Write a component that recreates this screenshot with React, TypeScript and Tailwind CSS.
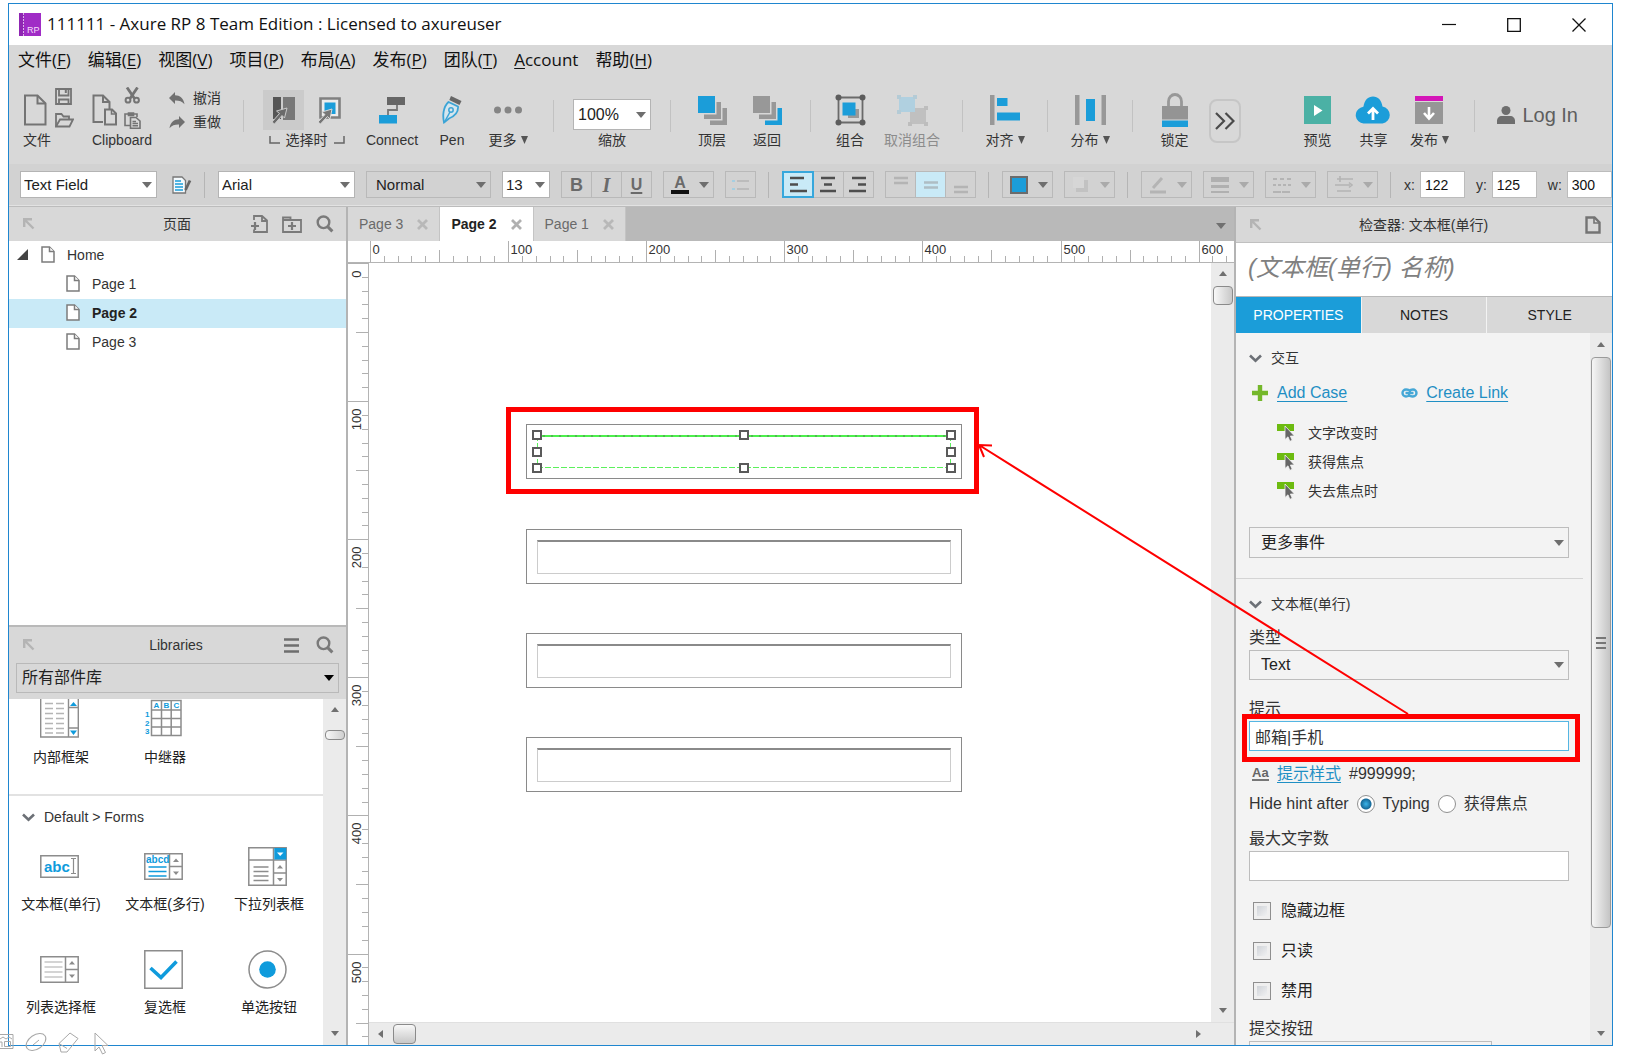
import React, { useState } from 'react'
import clsx from 'clsx'

const MENUS = [
  { label: '文件', hotkey: 'F' },
  { label: '编辑', hotkey: 'E' },
  { label: '视图', hotkey: 'V' },
  { label: '项目', hotkey: 'P' },
  { label: '布局', hotkey: 'A' },
  { label: '发布', hotkey: 'P' },
  { label: '团队', hotkey: 'T' },
  { label: 'Account' },
  { label: '帮助', hotkey: 'H' }
]

const PAGES = ['Page 1', 'Page 2', 'Page 3']
const TABS = ['Page 3', 'Page 2', 'Page 1']
const EVENTS = ['文字改变时', '获得焦点', '失去焦点时']
const FLAGS = ['隐藏边框', '只读', '禁用']

// Pixels on screen for 100 units of the ruler at this zoom
const HUNDRED = 138.1

/* ---------- small shared parts ---------- */

const Caret = ({ className = 'text-[#6e6e6e]' }: { className?: string }) => (
  <svg width="10" height="6" viewBox="0 0 10 6" className={className} aria-hidden="true">
    <path d="M0 0h10L5 6z" fill="currentColor" />
  </svg>
)

interface ComboProps {
  label: string
  value: string
  className?: string
  caret?: string
}

const Combo: React.FC<ComboProps> = ({ label, value, className = '', caret }) => (
  <div className={clsx('relative flex flex-none border', className)}>
    <select
      aria-label={label}
      defaultValue={value}
      className="w-full appearance-none bg-transparent pr-5 text-inherit outline-none"
    >
      <option>{value}</option>
    </select>
    <span className="pointer-events-none absolute inset-y-0 right-1 flex items-center">
      <Caret className={caret} />
    </span>
  </div>
)

const PopOut = () => (
  <svg width="12" height="12" viewBox="0 0 12 12" fill="none" stroke="#b4b4b4" strokeWidth="2.4" aria-hidden="true">
    <path d="M1.2 9V1.2H9M1.5 1.5l9 9" />
  </svg>
)

const Search = () => (
  <svg width="18" height="18" viewBox="0 0 18 18" fill="none" stroke="#7a7a7a" aria-hidden="true">
    <circle cx="7.5" cy="7.3" r="5.8" strokeWidth="2.4" />
    <path d="M11.6 11.6l4.8 4.8" strokeWidth="3" />
  </svg>
)

const Chevron = () => (
  <svg width="13" height="9" viewBox="0 0 13 9" fill="none" stroke="#6c7076" strokeWidth="2.6" aria-hidden="true">
    <path d="M1 1.5l5.5 5.2L12 1.5" />
  </svg>
)

const PageIcon = () => (
  <svg width="14" height="17" viewBox="0 0 14 17" fill="#fff" stroke="#7c7c7c" strokeWidth="1.5" aria-hidden="true">
    <path d="M1 1h7.5L13 5.5V16H1z" />
    <path d="M8.5 1v4.5H13" />
  </svg>
)

const Arrow = ({ dir }: { dir: 'up' | 'down' | 'left' | 'right' }) => {
  const d = {
    up: 'M4 1l4 5H0z',
    down: 'M0 2h8L4 7z',
    left: 'M1 4l5-4v8z',
    right: 'M7 4L2 0v8z'
  }[dir]
  return (
    <svg width="8" height="8" viewBox="0 0 8 8" className="flex-none" aria-hidden="true">
      <path d={d} fill="#707070" />
    </svg>
  )
}

/* ---------- toolbar ---------- */

interface ToolProps {
  label: string
  menu?: boolean
  disabled?: boolean
  className?: string
  children: React.ReactNode
}

const Tool: React.FC<ToolProps> = ({ label, menu, disabled, className = '', children }) => (
  <button type="button" disabled={disabled} className={clsx('flex flex-none flex-col items-center', className)}>
    <span className="flex h-10 items-center justify-center">{children}</span>
    <span className={clsx('flex items-center gap-1 whitespace-nowrap leading-5', disabled ? 'text-[#8c8c8c]' : 'text-[#333]')}>
      {label}
      {menu && (
        <svg width="7" height="8" viewBox="0 0 7 8" aria-hidden="true">
          <path d="M0 0h7L3.5 8z" fill="#555" />
        </svg>
      )}
    </span>
  </button>
)

const Sep = ({ className = '' }: { className?: string }) => (
  <span className={clsx('mt-[10px] h-8 w-px flex-none bg-[#c2c2c2]', className)} />
)

const Toolbar = () => (
  <div className="flex h-[86px] flex-none items-start overflow-hidden pt-3">
    <div className="w-[70px] flex-none pl-[14px]">
      <div className="flex h-10 items-center gap-2">
        <svg width="24" height="32" viewBox="0 0 24 32" fill="none" stroke="#747474" strokeWidth="2">
          <path d="M2 1.5h12.5L22.5 9.500V30.500H2z" />
          <path d="M14.500 1.500v8h8" />
        </svg>
        <div className="flex flex-col gap-2 pb-1">
          <svg width="18" height="17" viewBox="0 0 18 17" fill="none" stroke="#747474" strokeWidth="1.800">
            <path d="M1 1h15v15H1zM4 1v6.500h9.500V1M4 16v-4.500h9.500V16" />
            <path d="M10.800 2v3" strokeWidth="2" />
          </svg>
          <svg width="19" height="15" viewBox="0 0 19 15" fill="none" stroke="#747474" strokeWidth="1.800">
            <path d="M1 13.500V1h5.500l2 2.500H14V6.500" />
            <path d="M1 13.500l4-7h13l-3.500 7z" />
          </svg>
        </div>
      </div>
      <span className="leading-5 text-[#333]">文件</span>
    </div>
    <div className="w-[85px] flex-none pl-[13px]">
      <div className="flex h-10 items-center gap-[7px]">
        <svg width="25" height="32" viewBox="0 0 25 32" fill="none" stroke="#747474" strokeWidth="2">
          <path d="M11 28H1.500V1.500h9.500L17.500 8v7" />
          <path d="M11 1.500V8h6.500" />
          <path d="M13 15.500h7l4 4v11H13z" />
          <path d="M19.500 15.500v4.500H24" strokeWidth="1.500" />
        </svg>
        <div className="flex flex-col gap-2 pb-1">
          <svg width="17" height="17" viewBox="0 0 17 17" fill="none" stroke="#747474">
            <path d="M3 0.500l7.500 11M13.500 0.500L6 11.500" strokeWidth="2.800" />
            <circle cx="4" cy="13.200" r="2.400" strokeWidth="2" />
            <circle cx="12.500" cy="13.200" r="2.400" strokeWidth="2" />
          </svg>
          <svg width="17" height="17" viewBox="0 0 17 17" fill="none" stroke="#747474" strokeWidth="1.600">
            <path d="M6 13.500H1V2h12v3M4.500 1h5v2.500h-5z" />
            <path d="M6.500 5.500h5.500L16 9v7.200H6.500zM8.500 9.500h3.500M8.500 11.500h5.500M8.500 13.700h5.500" />
          </svg>
        </div>
      </div>
      <span className="leading-5 text-[#333]">Clipboard</span>
    </div>
    <div className="-mt-0.5 flex w-[79px] flex-none flex-col gap-1 pl-[5px] text-[#333]">
      <button type="button" className="flex h-5 items-center gap-2">
        <svg width="16" height="13" viewBox="0 0 16 13">
          <path d="M6 0v3.200c5 0 8.500 2.800 9.500 9C13 9 10 8.300 6 8.400V12L0 6z" fill="#707070" />
        </svg>
        撤消
      </button>
      <button type="button" className="flex h-5 items-center gap-2">
        <svg width="16" height="13" viewBox="0 0 16 13">
          <path d="M10 0v3.200c-5 0-8.500 2.800-9.500 9C3 9 6 8.300 10 8.400V12l6-6z" fill="#707070" />
        </svg>
        重做
      </button>
    </div>
    <Sep />
    <div className="w-[118px] flex-none pl-[19px] text-[#333]">
      <div className="flex h-10 w-[87px] justify-between">
        <button type="button" aria-label="相交选中" className="flex h-10 w-[41px] items-center justify-center bg-[#cbcbcb]">
          <svg width="24" height="28" viewBox="0 0 24 28">
            <path d="M1 1h8v22H1z" fill="#555" />
            <path d="M11 1h12v23H11z" fill="#787878" />
            <path d="M15 12L4.500 15l3 2.500L0 26l2.500 2 7.500-8.500 2.500 2.500z" fill="#6a6a6a" stroke="#c9c9c9" />
          </svg>
        </button>
        <button type="button" aria-label="包含选中" className="flex h-10 w-[41px] items-center justify-center">
          <svg width="24" height="28" viewBox="0 0 24 28">
            <path d="M2.500 2.500h19v19h-19z" fill="#ececec" stroke="#808080" strokeWidth="2.600" />
            <path d="M6.500 6.500h11v11.500h-11z" fill="#1b9dd9" />
            <path d="M14 13L4 16l3 2.500L0 26l2.500 2 7-7.500 2.500 2.500z" fill="#777" stroke="#d8d8d8" />
          </svg>
        </button>
      </div>
      <div className="flex w-[87px] items-center justify-center gap-[6px] leading-5">
        <svg width="11" height="8" viewBox="0 0 11 8" fill="none" stroke="#666" strokeWidth="1.500"><path d="M1 0v7h10" /></svg>
        选择时
        <svg width="11" height="8" viewBox="0 0 11 8" fill="none" stroke="#666" strokeWidth="1.500"><path d="M10 0v7H0" /></svg>
      </div>
    </div>
    <Tool label="Connect" className="w-[60px]">
      <svg width="27" height="28" viewBox="0 0 27 28">
        <path d="M8 1h18v8H8z" fill="#666" />
        <path d="M18 9v5H9v5" fill="none" stroke="#777" strokeWidth="1.800" />
        <path d="M0 19h18v8.500H0z" fill="#1b9dd9" />
      </svg>
    </Tool>
    <Tool label="Pen" className="w-[60px]">
      <svg width="20" height="28" viewBox="0 0 20 28">
        <path d="M9 0L19.500 5l-2 4L7.300 4z" fill="#666" />
        <path d="M6.500 6L16 10.500c.5 6-4 10-9 12L2 26.500C.5 20 1 11 6.500 6z" fill="#d5e6ee" stroke="#3ba4d6" strokeWidth="1.800" />
        <path d="M2.500 26l5.500-10" stroke="#3ba4d6" strokeWidth="1.500" />
        <circle cx="9" cy="14" r="2.200" fill="none" stroke="#3ba4d6" strokeWidth="1.500" />
      </svg>
    </Tool>
    <Tool label="更多" menu className="w-[52px]">
      <svg width="28" height="20" viewBox="0 0 28 20" fill="#858585">
        <circle cx="3.500" cy="10" r="3.500" /><circle cx="14" cy="10" r="3.500" /><circle cx="24.500" cy="10" r="3.500" />
      </svg>
    </Tool>
    <Sep className="ml-[19px]" />
    <div className="mx-[19px] mt-[9px] flex flex-none flex-col items-center">
      <Combo label="缩放" value="100%" className="h-[31px] w-[78px] border-[#b4b4b4] bg-white pl-1 text-base text-[#222]" />
      <span className="leading-5 text-[#333]">缩放</span>
    </div>
    <Sep />
    <Tool label="顶层" className="ml-[14px] w-[54px]">
      <svg width="29" height="30" viewBox="0 0 29 30">
        <path d="M0 1h17v17H0z" fill="#1b9dd9" />
        <path d="M18.500 7h4.500v17H6v-4.500h12.500zM24.500 13H29v17H12v-4.500h12.500z" fill="#989898" />
      </svg>
    </Tool>
    <Tool label="返回" className="w-14">
      <svg width="29" height="30" viewBox="0 0 29 30">
        <path d="M0 1h17v17H0zM18.500 7h4.500v17H6v-4.500h12.500z" fill="#989898" />
        <path d="M24.500 13H29v17H12v-4.500h12.500z" fill="#1b9dd9" />
      </svg>
    </Tool>
    <Sep className="ml-[15px]" />
    <Tool label="组合" className="ml-[9px] w-[60px]">
      <svg width="31" height="32" viewBox="0 0 31 32">
        <path d="M3.500 3.500h24v25h-24z" fill="none" stroke="#6a6a6a" strokeWidth="1.800" />
        <path d="M13 15h11v9H13z" fill="#999" />
        <path d="M7.500 8.500h13v13h-13z" fill="#1b9dd9" />
        <g fill="#5c5c5c"><circle cx="3.500" cy="3.500" r="3" /><circle cx="27.500" cy="3.500" r="3" /><circle cx="3.500" cy="28.500" r="3" /><circle cx="27.500" cy="28.500" r="3" /></g>
      </svg>
    </Tool>
    <Tool label="取消组合" disabled className="w-16">
      <svg width="31" height="32" viewBox="0 0 31 32">
        <path d="M13 14h16v16H13z" fill="#c0c0c0" />
        <path d="M2 3h16v15H2z" fill="#b0d0e0" />
        <g fill="#b4cbd6"><path d="M0 1h4v4H0zM16 1h4v4h-4zM0 16h4v4H0z" /></g>
        <g fill="#bdbdbd"><path d="M27 12h4v4h-4zM11 28h4v4h-4zM27 28h4v4h-4z" /></g>
      </svg>
    </Tool>
    <Sep className="ml-[18px]" />
    <Tool label="对齐" menu className="w-[84px]">
      <svg width="30" height="30" viewBox="0 0 30 30">
        <path d="M0 0h4.500v30H0z" fill="#989898" />
        <path d="M7 3h10.500v8H7zM7 17.500h23v8H7z" fill="#1b9dd9" />
      </svg>
    </Tool>
    <Sep />
    <Tool label="分布" menu className="w-[84px]">
      <svg width="31" height="30" viewBox="0 0 31 30">
        <path d="M0 0h4.500v30H0zM26.500 0H31v30h-4.500z" fill="#989898" />
        <path d="M11 4h9v22h-9z" fill="#1b9dd9" />
      </svg>
    </Tool>
    <Sep />
    <Tool label="锁定" className="ml-[7px] w-[69px]">
      <svg width="26" height="34" viewBox="0 0 26 34">
        <path d="M6.500 13V8.500a6.500 7 0 0 1 13 0V13" fill="none" stroke="#989898" strokeWidth="2.800" />
        <path d="M0 13h26v13.500H0z" fill="#949494" />
        <path d="M0 27.500h26V34H0z" fill="#1b9dd9" />
      </svg>
    </Tool>
    <button type="button" aria-label="展开" className="mt-[9px] flex h-11 w-8 flex-none items-center justify-center rounded-lg border-2 border-[#c6c6c6]">
      <svg width="20" height="18" viewBox="0 0 20 18" fill="none" stroke="#4a4a4a" strokeWidth="2.200">
        <path d="M1 1l8 8-8 8M10.500 1l8 8-8 8" />
      </svg>
    </button>
    <Tool label="预览" className="ml-auto w-14">
      <svg width="27" height="28" viewBox="0 0 27 28">
        <path d="M0 0h27v28H0z" fill="#4bb1a5" />
        <path d="M10 9v11l8.500-5.500z" fill="#fff" />
      </svg>
    </Tool>
    <Tool label="共享" className="w-14">
      <svg width="36" height="28" viewBox="0 0 36 28">
        <path d="M8.500 27.500A8.300 8.300 0 0 1 6 11.500C7.500 11 8 11 8.500 10.500 9.500 4 13 .5 18 .5S26.500 4 27.500 10.500a8.600 8.600 0 0 1 0 17z" fill="#1b9dd9" />
        <path d="M18 24V13M13 17.500l5-5 5 5" fill="none" stroke="#fff" strokeWidth="2.800" />
      </svg>
    </Tool>
    <Tool label="发布" menu className="w-14">
      <svg width="28" height="28" viewBox="0 0 28 28">
        <path d="M0 0h28v5H0z" fill="#d416b8" />
        <path d="M0 6h28v22H0z" fill="#969696" />
        <path d="M14 11v11M9 17l5 5.500 5-5.500" fill="none" stroke="#fff" strokeWidth="2.600" />
      </svg>
    </Tool>
    <Sep className="ml-[17px]" />
    <button type="button" className="mr-[34px] ml-[22px] mt-[13px] flex h-6 flex-none items-center gap-[7px] text-xl text-[#5e5e5e]">
      <svg width="18" height="18" viewBox="0 0 18 18" fill="#6e6e6e">
        <circle cx="9" cy="4.500" r="4.500" />
        <path d="M0 18v-3c0-3 2-5 5-5h8c3 0 5 2 5 5v3z" />
      </svg>
      Log In
    </button>
  </div>
)

/* ---------- format bar ---------- */

const BoxGroup = ({ children, className = '' }: { children: React.ReactNode; className?: string }) => (
  <div className={clsx('flex h-[27px] flex-none divide-x divide-[#b9b9b9] border border-[#b9b9b9]', className)}>{children}</div>
)

const Cell = ({ label, className = '', children }: { label: string; className?: string; children: React.ReactNode }) => (
  <button type="button" aria-label={label} className={clsx('flex flex-1 items-center justify-center', className)}>
    {children}
  </button>
)

const Lines = ({ d, color = '#4e4e4e', width = 2.4 }: { d: string; color?: string; width?: number }) => (
  <svg width="18" height="18" viewBox="0 0 18 18" fill="none" stroke={color} strokeWidth={width}><path d={d} /></svg>
)

const DropCell = ({ label, faded, children }: { label: string; faded?: boolean; children: React.ReactNode }) => (
  <button type="button" aria-label={label} className="flex h-[27px] w-[51px] flex-none items-center justify-between border border-[#b9b9b9] pr-1 pl-[7px]">
    {children}
    <Caret className={faded ? 'text-[#aaa]' : 'text-[#6e6e6e]'} />
  </button>
)

const FormatSep = () => <span className="mr-0.5 ml-px h-[26px] w-px flex-none bg-[#b5b5b5]" />

const Coord = ({ name, value }: { name: string; value: string }) => (
  <label className="flex flex-none items-center gap-[5px] text-[#333]">
    {name}:
    <input defaultValue={value} className="h-[27px] w-[45px] border border-[#bcbcbc] bg-white pl-1 text-sm text-[#111] outline-none" />
  </label>
)

const FormatBar = () => (
  <div className="flex h-[42px] flex-none items-center gap-[11px] overflow-hidden border-b border-[#e2e2e2] bg-[#d2d2d2] pl-[11px]">
    <Combo label="部件样式" value="Text Field" className="h-[27px] w-[137px] border-[#b4b4b4] bg-white pl-[3px] text-[15px] text-[#222]" />
    <button type="button" aria-label="编辑样式" className="ml-1 flex-none">
      <svg width="20" height="18" viewBox="0 0 20 18" fill="none">
        <path d="M1 1h9l3.500 3.500V17H1z" fill="#f4fafd" stroke="#777" strokeWidth="1.300" />
        <path d="M3 5h6M3 8h8M3 11h8M3 14h8" stroke="#1b9dd9" strokeWidth="1.500" />
        <path d="M18 4.500L13.500 14" stroke="#666" strokeWidth="2.800" />
      </svg>
    </button>
    <FormatSep />
    <Combo label="字体" value="Arial" className="h-[27px] w-[137px] border-[#b4b4b4] bg-white pl-[3px] text-[15px] text-[#222]" />
    <Combo label="字形" value="Normal" className="h-[27px] w-[125px] border-[#b9b9b9] pl-[9px] text-[15px] text-[#222]" />
    <Combo label="字号" value="13" className="h-[27px] w-[48px] border-[#b4b4b4] bg-white pl-[3px] text-[15px] text-[#222]" />
    <BoxGroup className="w-[91px]">
      <Cell label="粗体"><span className="text-lg font-bold text-[#6a6a6a]">B</span></Cell>
      <Cell label="斜体"><span className="font-['Liberation_Serif'] text-xl font-bold italic text-[#6a6a6a]">I</span></Cell>
      <Cell label="下划线"><span className="text-base font-bold text-[#6a6a6a] underline decoration-2 underline-offset-2">U</span></Cell>
    </BoxGroup>
    <DropCell label="文字颜色">
      <span className="flex w-[18px] flex-col items-center border-b-4 border-[#111] text-base leading-[14px] font-bold text-[#6a6a6a]">A</span>
    </DropCell>
    <BoxGroup className="w-[31px]">
      <Cell label="项目符号">
        <svg width="18" height="14" viewBox="0 0 18 14" fill="none" strokeWidth="2">
          <path d="M0 3h3M0 11h3" stroke="#a5cfe2" />
          <path d="M5 3h12M5 11h12" stroke="#bcbcbc" />
        </svg>
      </Cell>
    </BoxGroup>
    <FormatSep />
    <BoxGroup className="w-[92px]">
      <Cell label="左对齐" className="bg-[#c9eaf7] outline-2 -outline-offset-1 outline-[#36a7dc]"><Lines d="M1 2h14M1 8.500h8M1 15h17" /></Cell>
      <Cell label="居中"><Lines d="M2 2h14M5 8.500h8M1 15h16" /></Cell>
      <Cell label="右对齐"><Lines d="M3 2h14M9 8.500h8M0 15h17" /></Cell>
    </BoxGroup>
    <BoxGroup className="w-[91px]">
      <Cell label="顶部对齐"><Lines d="M2 2h14M2 7h14" color="#b4b4b4" /></Cell>
      <Cell label="垂直居中" className="bg-[#c9eaf7]"><Lines d="M2 6.500h14M2 11.500h14" color="#aebdc4" /></Cell>
      <Cell label="底部对齐"><Lines d="M2 11h14M2 16h14" color="#b4b4b4" /></Cell>
    </BoxGroup>
    <FormatSep />
    <DropCell label="填充颜色">
      <span className="size-[18px] border-2 border-[#6b6b6b] bg-[#1b9dd9]" />
    </DropCell>
    <DropCell label="阴影" faded>
      <svg width="18" height="18" viewBox="0 0 18 18"><path d="M4 4h12v12H4z" fill="#c2c2c2" /><path d="M1 1h11v11H1z" fill="#d6d6d6" /></svg>
    </DropCell>
    <FormatSep />
    <DropCell label="线段颜色" faded>
      <svg width="18" height="18" viewBox="0 0 18 18" fill="none" stroke="#b4b4b4"><path d="M4 12L13 2" strokeWidth="3" /><path d="M1 16h16" strokeWidth="3" /></svg>
    </DropCell>
    <DropCell label="线宽" faded>
      <svg width="18" height="18" viewBox="0 0 18 18" fill="none" stroke="#b0b0b0"><path d="M0 3.500h18" strokeWidth="5" /><path d="M0 10.500h18" strokeWidth="3" /><path d="M0 16h18" strokeWidth="2" /></svg>
    </DropCell>
    <DropCell label="线型" faded>
      <svg width="18" height="18" viewBox="0 0 18 18" fill="none" stroke="#b4b4b4" strokeWidth="2"><path d="M0 3h18" strokeDasharray="4 3" /><path d="M0 9h18" strokeDasharray="3 2" /><path d="M0 16h18" strokeDasharray="8 1" /></svg>
    </DropCell>
    <DropCell label="箭头" faded>
      <svg width="18" height="18" viewBox="0 0 18 18" fill="none" stroke="#b4b4b4" strokeWidth="1.600"><path d="M2 3h16M0 9h15M2 15h14M5 0v6M14 6.500l3 2.500-3 2.500" /></svg>
    </DropCell>
    <FormatSep />
    <Coord name="x" value="122" />
    <Coord name="y" value="125" />
    <Coord name="w" value="300" />
  </div>
)

/* ---------- left column ---------- */

const PagesPanel = () => (
  <section className="flex min-h-0 flex-1 flex-col bg-white">
    <header className="flex h-[34px] flex-none items-center bg-[#d8d8d8] pr-3 pl-[14px]">
      <PopOut />
      <h2 className="flex-1 pl-[68px] text-center text-[#333]">页面</h2>
      <div className="flex items-center gap-[14px]">
        <button type="button" aria-label="新增页面">
          <svg width="17" height="18" viewBox="0 0 17 18" fill="none" stroke="#7a7a7a" strokeWidth="1.800">
            <path d="M3 5V1h8l5 4.500V17H3v-2.500M11 1v5h5" />
            <path d="M0 11h8M4 7v8" strokeWidth="2.200" />
          </svg>
        </button>
        <button type="button" aria-label="新增文件夹">
          <svg width="20" height="17" viewBox="0 0 20 17" fill="none" stroke="#7a7a7a" strokeWidth="1.800">
            <path d="M1 16V1.500h7.500V4H19v12zM1 4h8" />
            <path d="M6 10h8M10 6v8" strokeWidth="2.200" />
          </svg>
        </button>
        <button type="button" aria-label="搜索页面"><Search /></button>
      </div>
    </header>
    <ul className="text-[#333]">
      <li className="flex h-[29px] items-center pb-0.5 pl-2">
        <svg width="11" height="11" viewBox="0 0 11 11" aria-hidden="true"><path d="M11 0v11H0z" fill="#444" /></svg>
        <span className="ml-[13px]"><PageIcon /></span>
        <span className="ml-3">Home</span>
      </li>
      {PAGES.map(page => (
        <li
          key={page}
          className={clsx('flex h-[29px] items-center gap-3 pb-0.5 pl-[57px]', page === 'Page 2' && 'bg-[#c9eaf7] font-bold text-[#222]')}
        >
          <PageIcon />
          {page}
        </li>
      ))}
    </ul>
  </section>
)

const Widget = ({ name, children }: { name: string; children: React.ReactNode }) => (
  <figure className="flex w-[104px] flex-none flex-col items-center">
    <div className="flex h-10 items-center pr-1">{children}</div>
    <figcaption className="mt-2 leading-5 whitespace-nowrap">{name}</figcaption>
  </figure>
)

const LibrariesPanel = () => (
  <section className="flex h-[420px] flex-none flex-col border-t-2 border-[#b9b9b9] bg-white">
    <header className="flex-none bg-[#d8d8d8] px-[7px] pb-[6px]">
      <div className="flex h-9 items-center pr-[5px] pl-[7px]">
        <PopOut />
        <h2 className="flex-1 pl-[33px] text-center text-[#333]">Libraries</h2>
        <div className="flex items-center gap-[17px]">
          <button type="button" aria-label="部件库选项">
            <svg width="15" height="15" viewBox="0 0 15 15" stroke="#6e6e6e" strokeWidth="2.600"><path d="M0 1.500h15M0 7.500h15M0 13.500h15" /></svg>
          </button>
          <button type="button" aria-label="搜索部件"><Search /></button>
        </div>
      </div>
      <Combo label="部件库" value="所有部件库" caret="text-black" className="h-[30px] w-full border-[#b9b9b9] pl-[5px] text-base text-[#222]" />
    </header>
    <div className="flex min-h-0 flex-1">
      <div className="min-w-0 flex-1 overflow-hidden text-[#222]">
        <div className="flex border-b-2 border-[#e2e2e2] pb-[27px]">
          <Widget name="内部框架">
            <svg width="39" height="40" viewBox="0 0 39 40" fill="none" stroke="#8c8c8c" strokeWidth="1.400">
              <path d="M.7-2h37.600v40H.7zM28.500 0v38M28.500 8.500h10M28.500 29h10" />
              <path d="M5 4.500h8M16 4.500h8M5 9.500h8M16 9.500h8M5 14.500h8M16 14.500h8M5 19.500h8M16 19.500h8M5 24.500h8M16 24.500h8M5 29.500h8M16 29.500h8M5 34h8M16 34h8" stroke="#b5b5b5" />
              <path d="M30 7l3.500-4L37 7zM30 31.500h7L33.500 36z" fill="#0f9bdc" stroke="none" />
            </svg>
          </Widget>
          <Widget name="中继器">
            <svg width="38" height="40" viewBox="0 0 38 40" fill="none" stroke="#8c8c8c" strokeWidth="1.500">
              <path d="M7.500 1.500h29.500v35H7.500zM7.500 11h29.500M7.500 19.500h29.500M7.500 28h29.500M17.500 1.500v35M27.200 1.500v35" />
              <g fill="#0f9bdc" stroke="none" className="text-[8px] font-bold">
                <text x="9.500" y="9">A</text><text x="19.500" y="9">B</text><text x="29.500" y="9">C</text>
                <text x="1" y="18">1</text><text x="1" y="27">2</text><text x="1" y="35">3</text>
              </g>
            </svg>
          </Widget>
        </div>
        <h3 className="mt-[11px] flex h-5 items-center gap-[9px] pl-[13px] text-[#333]">
          <Chevron /> Default &gt; Forms
        </h3>
        <div className="mt-[19px] flex flex-wrap gap-y-[35px]">
          <Widget name="文本框(单行)">
            <svg width="39" height="23" viewBox="0 0 39 23" fill="none" stroke="#8c8c8c" strokeWidth="1.500">
              <path d="M.8.8h37.400v21.400H.8z" />
              <text x="4" y="17" fill="#0f9bdc" stroke="none" className="text-[15px] font-bold">abc</text>
              <path d="M31 3.500h5M31 18.500h5M33.500 3.500v15" strokeWidth="1.200" />
            </svg>
          </Widget>
          <Widget name="文本框(多行)">
            <svg width="39" height="27" viewBox="0 0 39 27" fill="none" stroke="#8c8c8c" strokeWidth="1.500">
              <path d="M.8.8h37.400v25.400H.8zM25.500.8v25.400M25.500 13.500h13" />
              <text x="2" y="10" fill="#0f9bdc" stroke="none" className="text-[10px] font-bold">abcd</text>
              <path d="M4.500 14h18M4.500 18.500h18M4.500 23h18" stroke="#0f9bdc" />
              <path d="M29 9l3-3.500L35 9zM29 18.500h6L32 22z" fill="#8c8c8c" stroke="none" />
            </svg>
          </Widget>
          <Widget name="下拉列表框">
            <svg width="39" height="39" viewBox="0 0 39 39" fill="none" stroke="#8c8c8c" strokeWidth="1.500">
              <path d="M.8.8h37.400v37.400H.8zM25.500.8v37.400M.8 13h37.400M25.500 26h13" />
              <path d="M26.300 1h12v11.500h-12z" fill="#0f9bdc" stroke="none" />
              <path d="M29 5.500h6.500L32.200 9z" fill="#fff" stroke="none" />
              <path d="M5.500 20h15M5.500 24.500h15M5.500 29h15M5.500 33.500h15" strokeWidth="1.300" />
              <path d="M29 21.500l3-3.500 3 3.500zM29 31h6l-3 3.500z" fill="#8c8c8c" stroke="none" />
            </svg>
          </Widget>
          <Widget name="列表选择框">
            <svg width="39" height="27" viewBox="0 0 39 27" fill="none" stroke="#8c8c8c" strokeWidth="1.500">
              <path d="M.8.8h37.400v25.400H.8zM25.500.8v25.400M25.500 13.500h13" />
              <path d="M4.500 6h18M4.500 11h18M4.500 16h18M4.500 21h18" stroke="#aaa" strokeWidth="1.200" />
              <path d="M29 8.500l3-3.500 3 3.500zM29 18.500h6L32 22z" fill="#8c8c8c" stroke="none" />
            </svg>
          </Widget>
          <Widget name="复选框">
            <svg width="39" height="39" viewBox="0 0 39 39" fill="none">
              <path d="M.8.8h37.400v37.400H.8z" stroke="#8c8c8c" strokeWidth="1.500" />
              <path d="M6.500 18L17 27.500 32.500 11.500" stroke="#0f9bdc" strokeWidth="3.600" />
            </svg>
          </Widget>
          <Widget name="单选按钮">
            <svg width="39" height="39" viewBox="0 0 39 39">
              <circle cx="19.500" cy="19.500" r="18.500" fill="#fff" stroke="#8c8c8c" strokeWidth="1.500" />
              <circle cx="19.500" cy="19.500" r="8.300" fill="#0f9bdc" />
            </svg>
          </Widget>
        </div>
      </div>
      <div className="flex w-[23px] flex-none flex-col items-center justify-between bg-[#ebebeb] pt-[7px] pb-2">
        <div className="flex flex-col items-center gap-4">
          <Arrow dir="up" />
          <span className="h-[10px] w-5 rounded-sm border border-[#8a8a8a] bg-linear-to-r from-[#f8f8f8] to-[#d0d0d0]" />
        </div>
        <Arrow dir="down" />
      </div>
    </div>
  </section>
)

/* ---------- canvas ---------- */

const Ruler = ({ vertical }: { vertical?: boolean }) => {
  const ticks = Array.from({ length: vertical ? 57 : 63 }, (_, i) => i)
  return (
    <svg width={vertical ? 21 : '100%'} height={vertical ? '100%' : 21} className="block bg-white" aria-hidden="true">
      {ticks.map(i => {
        const pos = Math.round((i * HUNDRED) / 10) + 0.5
        const len = i % 10 === 0 ? 21 : i % 5 === 0 ? 12 : 6
        return (
          <g key={i}>
            <path d={vertical ? `M20 ${pos}h-${len}` : `M${pos} 21v-${len}`} stroke="#b0b0b0" />
            {i % 10 === 0 && (
              <text
                className="fill-[#333] text-[13px]"
                x={vertical ? -pos - 7 : pos + 2}
                y={13}
                textAnchor={vertical ? 'end' : 'start'}
                transform={vertical ? 'rotate(-90)' : undefined}
              >
                {i * 10}
              </text>
            )}
          </g>
        )
      })}
    </svg>
  )
}

// Fields drawn on the design surface, by top edge
const FIELDS = [161, 266, 370, 474]

const HANDLES = [
  'left-[-5px] top-[-5px]',
  'left-[202px] top-[-5px]',
  'left-[409px] top-[-5px]',
  'left-[-5px] top-[12px]',
  'left-[409px] top-[12px]',
  'left-[-5px] top-[28px]',
  'left-[202px] top-[28px]',
  'left-[409px] top-[28px]'
]

const Canvas = () => (
  <main className="flex min-w-0 flex-1 flex-col border-x-2 border-[#b4b4b4] bg-white">
    <div className="flex h-[34px] flex-none items-stretch bg-[#b9b9b9]">
      {TABS.map(tab => {
        const active = tab === 'Page 2'
        return (
          <div
            key={tab}
            className={clsx(
              'flex flex-none items-center gap-[14px] border-r border-[#c4c4c4] px-[11px]',
              active ? 'bg-white font-bold text-[#222]' : 'bg-[#d8d8d8] text-[#6a6a6a]'
            )}
          >
            {tab}
            <button type="button" aria-label={`关闭 ${tab}`}>
              <svg width="11" height="11" viewBox="0 0 11 11" stroke={active ? '#b0b0b0' : '#b8b8b8'} strokeWidth="2.800">
                <path d="M1 1l9 9M10 1l-9 9" />
              </svg>
            </button>
          </div>
        )
      })}
      <button type="button" aria-label="页面列表" className="mr-2 ml-auto pt-1">
        <Caret className="text-[#707070]" />
      </button>
    </div>
    <div className="flex h-[22px] flex-none border-b border-[#b4b4b4] pl-[22px]">
      <div className="min-w-0 flex-1 overflow-hidden"><Ruler /></div>
    </div>
    <div className="flex min-h-0 flex-1">
      <div className="w-[21px] flex-none overflow-hidden border-r border-[#b4b4b4]"><Ruler vertical /></div>
      <div className="flex min-w-0 flex-1 flex-col">
        <div className="flex min-h-0 flex-1">
          <div className="relative min-w-0 flex-1 overflow-hidden">
            {FIELDS.map((top, i) => (
              <div key={top} style={{ top }} className="absolute left-[157px] h-[55px] w-[436px] border border-[#8a8a8a] p-[10px]">
                {i === 0 ? (
                  <div className="relative h-[33px]">
                    <svg width="414" height="33" viewBox="0 0 414 33" fill="none" className="block" aria-hidden="true">
                      <path d="M0 1h414" stroke="#4fb84f" strokeWidth="2" />
                      <path d="M0 1h414" stroke="#4cf04c" strokeWidth="2" strokeDasharray="6 2" />
                      <path d="M0 32.500h414M.500 0v33M413.500 0v33" stroke="#5cf05c" strokeDasharray="6 2" />
                    </svg>
                    {HANDLES.map(pos => (
                      <span key={pos} className={clsx('absolute size-[10px] border-2 border-[#5a5a5a] bg-white', pos)} />
                    ))}
                  </div>
                ) : (
                  <div className="h-[34px] border border-t-2 border-[#ccc] border-t-[#8a8a8a]" />
                )}
              </div>
            ))}
            <span className="absolute top-[144px] left-[137px] h-[87px] w-[473px] border-5 border-[#fe0000]" />
          </div>
          <div className="flex w-[23px] flex-none flex-col items-center justify-between bg-[#ebebeb] pt-[7px] pb-2">
            <div className="flex flex-col items-center gap-2">
              <Arrow dir="up" />
              <span className="h-[19px] w-5 rounded-sm border border-[#8a8a8a] bg-linear-to-r from-[#f8f8f8] to-[#c8c8c8]" />
            </div>
            <Arrow dir="down" />
          </div>
        </div>
        <div className="flex h-[23px] flex-none items-center justify-between border-t border-[#e0e0e0] bg-[#ebebeb] pr-8 pl-2">
          <div className="flex items-center gap-2">
            <Arrow dir="left" />
            <span className="h-5 w-[23px] rounded-sm border border-[#8a8a8a] bg-linear-to-b from-[#f8f8f8] to-[#c8c8c8]" />
          </div>
          <Arrow dir="right" />
        </div>
      </div>
    </div>
  </main>
)

/* ---------- inspector ---------- */

const Inspector = () => {
  const [hideAfter, setHideAfter] = useState<'typing' | 'focus'>('typing')
  const radio =
    'size-[18px] appearance-none rounded-full border border-[#909090] bg-white checked:bg-[radial-gradient(circle,#3bb5ea_0,#176a99_5px,#fff_6px)]'

  return (
    <aside className="flex w-[376px] flex-none flex-col bg-[#f3f3f3]">
      <header className="flex h-9 flex-none items-center border-b border-[#c0c0c0] bg-[#d8d8d8] pr-[11px] pl-[14px]">
        <PopOut />
        <h2 className="flex-1 text-center text-[#333]">检查器: 文本框(单行)</h2>
        <button type="button" aria-label="页面属性">
          <svg width="16" height="18" viewBox="0 0 16 18" fill="none" stroke="#747474" strokeWidth="2.400">
            <path d="M1.500 1.500h8l5 5v10h-13z" />
            <path d="M9 1.500V7h5.500" strokeWidth="1.600" />
          </svg>
        </button>
      </header>
      <input
        aria-label="部件名称"
        placeholder="(文本框(单行) 名称)"
        className="h-[54px] w-full flex-none border-b border-[#b9b9b9] bg-white pb-1 pl-3 text-2xl italic outline-none placeholder:text-[#808080]"
      />
      <div className="flex h-9 flex-none gap-px bg-[#f3f3f3] text-[#222]">
        <button type="button" className="flex-1 bg-[#1b9dd9] text-white">PROPERTIES</button>
        <button type="button" className="flex-1 bg-[#d8d8d8]">NOTES</button>
        <button type="button" className="flex-1 bg-[#d8d8d8]">STYLE</button>
      </div>
      <div className="flex min-h-0 flex-1">
        <div className="min-w-0 flex-1 overflow-hidden pt-[15px] text-base leading-5 text-[#333]">
          <section className="mr-[7px] border-b border-[#d4d4d4] pr-[14px] pb-5 pl-[13px]">
            <h3 className="flex h-5 items-center gap-[9px] text-sm"><Chevron /> 交互</h3>
            <div className="mt-[13px] flex h-6 items-center pl-[3px] text-[#1f8fc4]">
              <svg width="16" height="16" viewBox="0 0 16 16" aria-hidden="true"><path d="M5.800 0h4.400v5.800H16v4.400h-5.800V16H5.800v-5.800H0V5.800h5.800z" fill="#74b72a" /></svg>
              <a href="#case" className="ml-[9px] underline underline-offset-3">Add Case</a>
              <svg width="17" height="10" viewBox="0 0 17 10" fill="none" stroke="#45a7d6" strokeWidth="2.400" className="ml-[54px]" aria-hidden="true">
                <path d="M9.500 3.500C8.500 1.500 7 1.500 5 1.500a3.500 3.500 0 0 0 0 7c1.500 0 2.500-.2 3.500-1.800M7.500 6.500c1 2 2.500 2 4.500 2a3.500 3.500 0 0 0 0-7c-1.500 0-2.500.2-3.500 1.800M4.500 5h8" />
              </svg>
              <a href="#link" className="ml-2 underline underline-offset-3">Create Link</a>
            </div>
            <ul className="mt-[13px] text-sm">
              {EVENTS.map(event => (
                <li key={event} className="flex h-[29px] items-center gap-[14px] pl-7">
                  <svg width="17" height="19" viewBox="0 0 17 19" aria-hidden="true">
                    <path d="M0 1h17v7H0z" fill="#6dbb10" />
                    <path d="M8 3v13.500l3-2.700 1.800 4.500 2.400-1-1.800-4.300H17.500z" fill="#666" stroke="#f3f3f3" strokeWidth=".8" />
                  </svg>
                  {event}
                </li>
              ))}
            </ul>
            <Combo label="更多事件" value="更多事件" className="mt-[22px] h-[31px] border-[#bdbdbd] pl-[11px] text-[#222]" />
          </section>

          <section className="mr-[7px] pt-[15px] pr-[14px] pl-[13px]">
            <h3 className="flex h-5 items-center gap-[9px] text-sm"><Chevron /> 文本框(单行)</h3>
            <p className="mt-[14px]">类型</p>
            <Combo label="类型" value="Text" className="mt-0.5 h-[30px] border-[#bdbdbd] pl-[11px] text-[#222]" />
            <label htmlFor="hint" className="mt-[19px] block">提示</label>
            <div className="relative mt-0.5">
              <input id="hint" defaultValue="邮箱|手机" className="block h-[30px] w-full border border-[#55b6e3] bg-white pl-[5px] text-[#333] outline-none" />
              <span className="pointer-events-none absolute -top-[7px] -right-[11px] -bottom-[11px] -left-[7px] border-5 border-[#fe0000]" />
            </div>
            <div className="mt-[13px] flex h-5 items-center pl-[3px]">
              <span className="w-[17px] border-b-2 border-[#777] text-[13px] leading-3 font-bold text-[#666]">Aa</span>
              <a href="#hint-style" className="ml-2 text-[#1f8fc4] underline underline-offset-3">提示样式</a>
              <span className="ml-2">#999999;</span>
            </div>
            <div className="mt-[10px] flex h-5 items-center whitespace-nowrap">
              Hide hint after
              <label className="ml-2 flex items-center gap-2">
                <input type="radio" name="hide" className={radio} checked={hideAfter === 'typing'} onChange={() => setHideAfter('typing')} />
                Typing
              </label>
              <label className="ml-2 flex items-center gap-2">
                <input type="radio" name="hide" className={radio} checked={hideAfter === 'focus'} onChange={() => setHideAfter('focus')} />
                获得焦点
              </label>
            </div>
            <label htmlFor="max" className="mt-[15px] block">最大文字数</label>
            <input id="max" className="mt-0.5 block h-[30px] w-full border border-[#bdbdbd] bg-white px-1 outline-none" />
            <div className="mt-5 flex flex-col gap-5 pl-1">
              {FLAGS.map(flag => (
                <label key={flag} className="flex h-5 items-center gap-[10px] text-[#222]">
                  <input
                    type="checkbox"
                    className="size-[18px] appearance-none border border-[#8f8f8f] bg-linear-to-br from-[#c6cad0] to-[#fafafa] shadow-[inset_0_0_0_3px_#efefef] checked:bg-[#1b9dd9]"
                  />
                  {flag}
                </label>
              ))}
            </div>
            <label htmlFor="submit" className="mt-[18px] block">提交按钮</label>
            <input id="submit" className="mt-0.5 block h-[30px] w-[243px] border border-[#bdbdbd] bg-[#f3f3f3] px-1 outline-none" />
          </section>
        </div>
        <div className="flex w-[22px] flex-none flex-col items-center bg-[#ebebeb] pt-2 pb-2">
          <Arrow dir="up" />
          <div className="mt-2 flex h-[571px] w-5 flex-col items-center justify-center gap-[3px] rounded-sm border border-[#9a9a9a] bg-linear-to-r from-[#f6f6f6] to-[#c4c4c4]">
            <span className="h-0.5 w-[10px] bg-[#777]" />
            <span className="h-0.5 w-[10px] bg-[#777]" />
            <span className="h-0.5 w-[10px] bg-[#777]" />
          </div>
          <span className="mt-auto"><Arrow dir="down" /></span>
        </div>
      </div>
    </aside>
  )
}

/* ---------- window ---------- */

const TitleBar = () => (
  <div className="flex h-[41px] flex-none items-center bg-white pl-[10px]">
    <svg width="22" height="23" viewBox="0 0 22 23" aria-hidden="true">
      <path d="M0 0h22v23H0z" fill="#a02cc6" />
      <path d="M0 0h5v23H0z" fill="#8f26b3" />
      <path d="M4.500 0v23" stroke="#dcb4ea" strokeDasharray="2 1" />
      <text x="8" y="20" fill="#f3dcfa" className="text-[9px]">RP</text>
    </svg>
    <h1 className="ml-[6px] flex-1 font-['Open_Sans','Noto_Sans_CJK_SC',sans-serif] text-[17px] text-[#111]">
      111111 - Axure RP 8 Team Edition : Licensed to axureuser
    </h1>
    <div className="flex items-center gap-[51px] pr-[26px]">
      <button type="button" aria-label="最小化">
        <svg width="14" height="14" viewBox="0 0 14 14" stroke="#111" strokeWidth="1.200"><path d="M0 6.500h14" /></svg>
      </button>
      <button type="button" aria-label="最大化">
        <svg width="14" height="14" viewBox="0 0 14 14" fill="none" stroke="#111" strokeWidth="1.300"><path d="M.7.700h12.600v12.600H.7z" /></svg>
      </button>
      <button type="button" aria-label="关闭">
        <svg width="14" height="14" viewBox="0 0 14 14" stroke="#111" strokeWidth="1.300"><path d="M.5.500l13 13M13.500.500l-13 13" /></svg>
      </button>
    </div>
  </div>
)

const MenuBar = () => (
  <nav className="flex h-[33px] flex-none items-center gap-[17px] overflow-hidden pb-0.5 pl-[9px] font-['Open_Sans','Noto_Sans_CJK_SC',sans-serif] text-[17px] text-[#111]">
    {MENUS.map(({ label, hotkey }) => (
      <button key={label} type="button" className="flex-none whitespace-nowrap">
        {hotkey ? (
          <>{label}(<u className="underline-offset-2">{hotkey}</u>)</>
        ) : (
          <><u className="underline-offset-2">{label[0]}</u>{label.slice(1)}</>
        )}
      </button>
    ))}
  </nav>
)

export default function App() {
  return (
    <div className="relative h-screen overflow-hidden bg-white pt-[3px] pr-3 pb-3 pl-2 font-['Liberation_Sans','Noto_Sans_CJK_SC',sans-serif] text-sm">
      <div className="flex h-full flex-col border border-[#1f86cf] bg-[#d8d8d8]">
        <TitleBar />
        <MenuBar />
        <Toolbar />
        <FormatBar />
        <div className="flex min-h-0 flex-1 border-t border-[#bcbcbc]">
          <div className="flex w-[337px] flex-none flex-col">
            <PagesPanel />
            <LibrariesPanel />
          </div>
          <Canvas />
          <Inspector />
        </div>
      </div>

      {/* Callout arrow from the hint field to the selected widget */}
      <svg width="432" height="274" viewBox="0 0 432 274" className="pointer-events-none absolute top-[441px] left-[977px]" fill="none" stroke="#fe0000" strokeWidth="2">
        <path d="M431 273L2 4M15 4.500L2 4l5 12" />
      </svg>

      {/* Slide-show controls at the lower left */}
      <svg width="112" height="24" viewBox="0 0 112 24" className="pointer-events-none absolute bottom-[2px] left-0" fill="none" stroke="#a8a8a8">
        <path d="M0 2.500h13v14H0M0 7l3-2 3 2 3-2 3 2M4.500 9.500h6v5h-6zM0 10h2v5" />
        <ellipse cx="36" cy="10" rx="11" ry="7" transform="rotate(-35 36 10)" />
        <path d="M33 13l6-5M59 11.500L70 1l8 5.500L67 20h-6zM59 11.500l8 5M95 1v18l4-4 3.500 7 3-1.500-3.500-7h6z" />
      </svg>
    </div>
  )
}
